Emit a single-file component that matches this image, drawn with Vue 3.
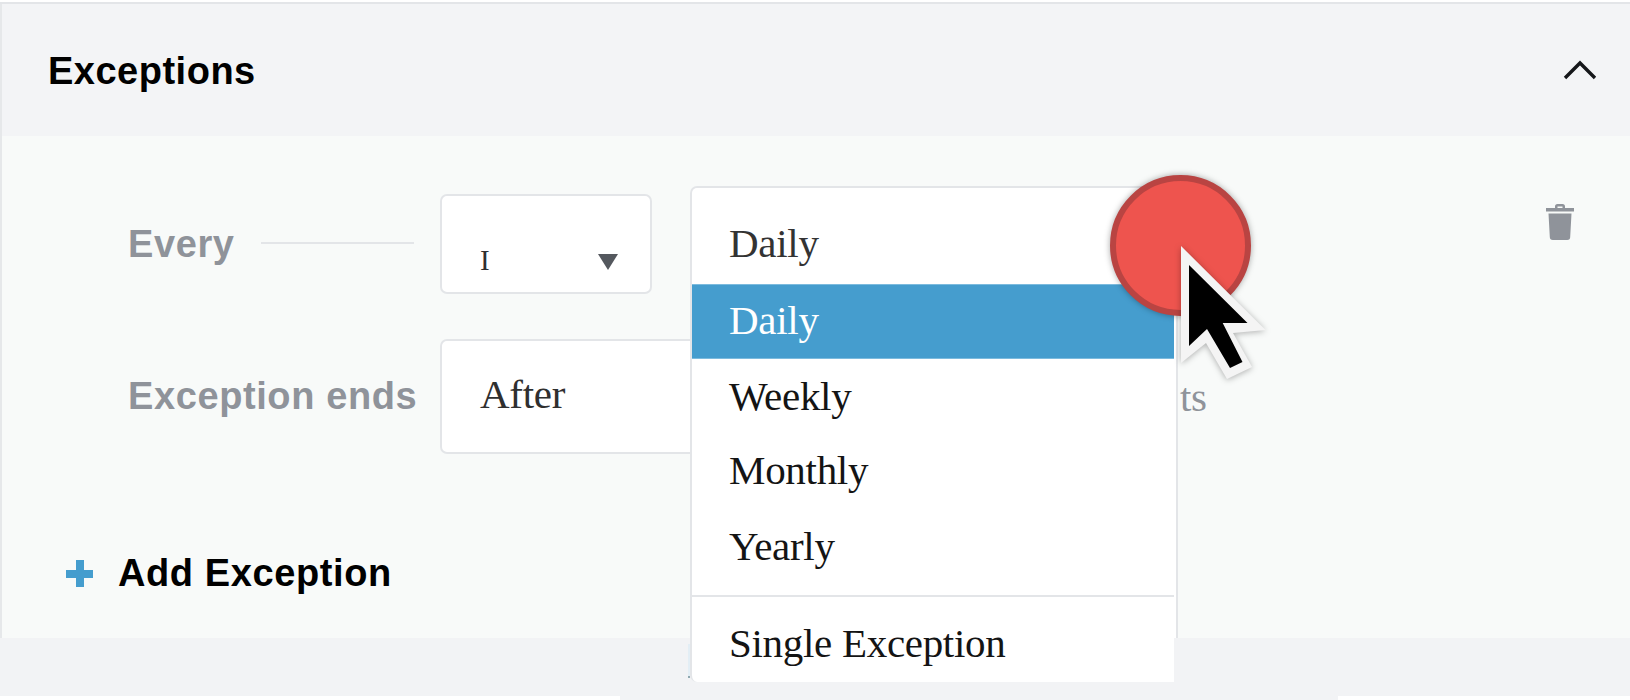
<template>
  <div class="page">
    <section class="panel">
      <header class="panel-head">
        <h2>Exceptions</h2>
        <svg class="chevron" width="36" height="22" viewBox="0 0 36 22">
          <path d="M3 19 L18 4 L33 19" fill="none" stroke="#15171a" stroke-width="3.4" />
        </svg>
      </header>

      <div class="panel-body">
        <div class="rule-row">
          <div class="rule-label every">
            <span>Every</span>
            <i class="dash"></i>
          </div>
          <div class="box num-box">
            <span class="num">I</span>
            <span class="caret"></span>
          </div>
          <svg class="trash" width="30" height="38" viewBox="0 0 30 38">
            <path d="M10 5 V3.5 A2.5 2.5 0 0 1 12.500 1 H17.500 A2.500 2.500 0 0 1 20 3.500 V5 H29 V8.500 H1 V5 Z M12.500 5 H17.500 V3.500 H12.500 Z" fill="#8f939a" fill-rule="evenodd" />
            <path d="M3.500 10.500 H26.500 L25.200 34 A3 3 0 0 1 22.200 37 H7.800 A3 3 0 0 1 4.800 34 Z" fill="#8f939a" />
          </svg>
        </div>

        <div class="rule-row ends-row">
          <div class="rule-label">Exception ends</div>
          <div class="box after-box">After</div>
          <span class="unit">ts</span>
        </div>

        <button class="add-btn" type="button">
          <span class="plus"></span>
          Add Exception
        </button>

        <!-- open dropdown sits over the form -->
        <i class="dd-edge"></i>
        <div class="dropdown">
          <div class="dd-current">Daily</div>
          <ul class="dd-list">
            <li v-for="opt in options" :key="opt" :class="{ active: opt === selected }">{{ opt }}</li>
          </ul>
          <div class="dd-sep"></div>
          <div class="dd-single">Single Exception</div>
        </div>
      </div>
      <div class="panel-foot"></div>
      <div class="foot-tab"></div>
    </section>

    <div class="click-dot"></div>
    <svg class="cursor" width="100" height="150" viewBox="1175 240 100 150">
      <polygon points="1181,246 1265.500,330 1233,333 1252,367 1227,379 1206,343 1181,363" fill="#f4f4f4" />
      <polygon points="1189,265 1247.500,323 1222.700,323 1242.500,362 1230,368 1207,329 1189,346" fill="#000" />
    </svg>
  </div>
</template>

<script setup>
const options = ['Daily', 'Weekly', 'Monthly', 'Yearly']
const selected = 'Daily'
</script>

<style>
html, body {
  margin: 0;
  background: #fff;
  overflow: hidden;
}
</style>

<style scoped>
.page {
  position: relative;
  width: 1630px;
  height: 700px;
  overflow: hidden;
  font-family: "Liberation Sans", Arial, sans-serif;
  background: #fff;
  padding-top: 2px;
  box-sizing: border-box;
}
.panel {
  border-top: 2px solid #e3e5e8;
}
.panel-head {
  height: 132px;
  box-sizing: border-box;
  background: #f3f4f6;
  border-left: 2px solid #e6e8ea;
  display: flex;
  align-items: center;
  justify-content: space-between;
  padding: 2px 32px 0 46px;
}
.panel-head h2 {
  margin: 0;
  font-size: 38px;
  line-height: 40px;
  font-weight: 700;
  letter-spacing: 0.5px;
  color: #000;
}
.chevron {
  margin-top: -2px;
}
.panel-body {
  position: relative;
  height: 502px;
  box-sizing: border-box;
  background: #f8faf9;
  border-left: 2px solid #e6e8ea;
  padding: 58px 0 0 126px;
}
.panel-foot {
  height: 58px;
  background: #f2f3f5;
}
.foot-tab {
  width: 718px;
  height: 4px;
  margin-left: 620px;
  background: #f2f3f5;
}
.rule-row {
  display: flex;
  align-items: center;
}
.ends-row {
  margin-top: 45px;
}
.rule-label {
  width: 312px;
  flex: none;
  font-size: 38px;
  font-weight: 700;
  letter-spacing: 0.6px;
  color: #8f939a;
  display: flex;
  align-items: center;
}
.dash {
  width: 153px;
  height: 2px;
  margin: -2px 0 0 26px;
  background: #e3e5e8;
}
.box {
  background: #fff;
  border: 2px solid #e3e5e8;
  border-radius: 7px;
  box-sizing: border-box;
  font-family: "Liberation Serif", "Times New Roman", serif;
  color: #2f2f2f;
}
.num-box {
  width: 212px;
  height: 100px;
  display: flex;
  align-items: flex-end;
  justify-content: space-between;
  padding: 0 32px 20px 38px;
}
.num {
  font-size: 29px;
  line-height: 24px;
}
.caret {
  width: 0;
  height: 0;
  margin-bottom: 2px;
  border-left: 10.500px solid transparent;
  border-right: 10.500px solid transparent;
  border-top: 16px solid #54585e;
}
.trash {
  margin-left: auto;
  margin-right: 55px;
  transform: translateY(-22px);
}
.after-box {
  width: 400px;
  height: 115px;
  display: flex;
  align-items: center;
  padding: 0 0 6px 38px;
  font-size: 41px;
  letter-spacing: -0.3px;
}
.unit {
  margin-left: 340px;
  font-family: "Liberation Serif", "Times New Roman", serif;
  font-size: 41px;
  letter-spacing: -0.3px;
  color: #8f939a;
}
.add-btn {
  display: flex;
  align-items: center;
  gap: 25px;
  margin: 98px 0 0 -62px;
  padding: 0;
  border: 0;
  background: none;
  font-family: inherit;
  font-size: 38px;
  font-weight: 700;
  letter-spacing: 0.6px;
  color: #000;
}
.plus {
  width: 27px;
  height: 27px;
  background:
    linear-gradient(#459dce, #459dce) center / 100% 8px no-repeat,
    linear-gradient(#459dce, #459dce) center / 8px 100% no-repeat;
}
.dd-edge {
  position: absolute;
  left: 686px;
  top: 508px;
  width: 2px;
  height: 34px;
  background: linear-gradient(#e3eef5 94%, #8fa8b0 94%);
}
.dropdown {
  position: absolute;
  left: 688px;
  top: 50px;
  width: 488px;
  height: 496px;
  box-sizing: border-box;
  background: #fff;
  border: 2px solid #e3e5e8;
  border-bottom: 0;
  border-radius: 7px 7px 0 7px;
  font-family: "Liberation Serif", "Times New Roman", serif;
  font-size: 41px;
  letter-spacing: -0.3px;
  color: #141414;
  clip-path: polygon(0 0, 100% 0, 100% 452px, 484px 452px, 484px 100%, 0 100%);
}
.dd-current {
  height: 96px;
  box-sizing: border-box;
  padding: 32px 0 0 37px;
  line-height: 46px;
  color: #333;
}
.dd-list {
  list-style: none;
  margin: 0;
  padding: 0;
  width: 482px;
}
.dd-list li {
  height: 75px;
  line-height: 74px;
  padding-left: 37px;
}
.dd-list li:nth-child(3) {
  line-height: 72px;
}
.dd-list li.active {
  background: #459dce;
  color: #fff;
  border-top: 1px solid #7cbbde;
  border-bottom: 1px solid #7cbbde;
  box-sizing: border-box;
  line-height: 70px;
}
.dd-sep {
  width: 482px;
  height: 2px;
  margin-top: 11px;
  background: #e3e5e8;
}
.dd-single {
  padding: 23px 0 0 37px;
  line-height: 46px;
}
.click-dot {
  position: absolute;
  left: 1110px;
  top: 175px;
  width: 141px;
  height: 141px;
  box-sizing: border-box;
  border-radius: 50%;
  background: #ee544e;
  border: 6px solid #b94442;
  box-shadow: 0 0 6px rgba(0, 0, 0, 0.35);
}
.cursor {
  position: absolute;
  left: 1175px;
  top: 240px;
  filter: drop-shadow(0 1px 3px rgba(0, 0, 0, 0.3));
}
</style>
